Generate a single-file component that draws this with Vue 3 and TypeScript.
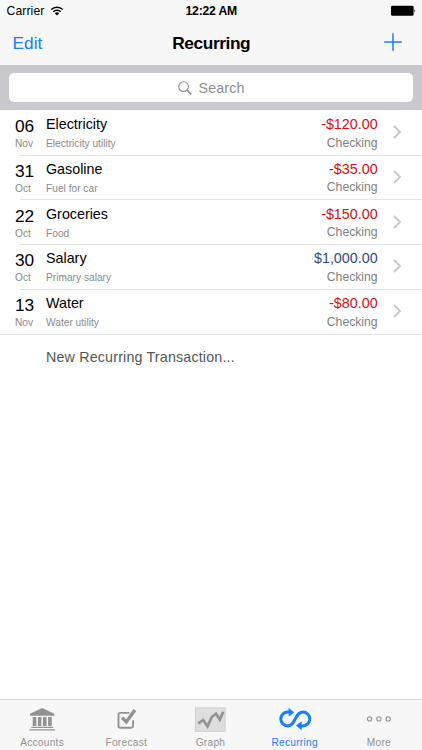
<script setup lang="ts">
interface Entry {
  day: string
  month: string
  name: string
  note: string
  amount: string
  account: string
}

const entries: Entry[] = [
  { day: '06', month: 'Nov', name: 'Electricity', note: 'Electricity utility', amount: '-$120.00', account: 'Checking' },
  { day: '31', month: 'Oct', name: 'Gasoline', note: 'Fuel for car', amount: '-$35.00', account: 'Checking' },
  { day: '22', month: 'Oct', name: 'Groceries', note: 'Food', amount: '-$150.00', account: 'Checking' },
  { day: '30', month: 'Oct', name: 'Salary', note: 'Primary salary', amount: '$1,000.00', account: 'Checking' },
  { day: '13', month: 'Nov', name: 'Water', note: 'Water utility', amount: '-$80.00', account: 'Checking' },
]
const tabs: string[] = ['Accounts', 'Forecast', 'Graph', 'Recurring', 'More']
</script>

<template>
  <div class="screen">
    <header class="top">
      <div class="status">
        <div class="carrier">
          <span>Carrier</span>
          <svg class="wifi" width="14" height="10" viewBox="0 0 14 10">
            <path d="M1.2 3.5a8.4 8.4 0 0 1 11.6 0M3.3 5.8a5.3 5.3 0 0 1 7.4 0" fill="none" stroke="#000" stroke-width="1.5" />
            <path d="M7 9.6 4.8 7.3a3.2 3.2 0 0 1 4.4 0z" />
          </svg>
        </div>
        <span class="clock">12:22 AM</span>
        <svg class="battery" width="26" height="12" viewBox="0 0 26 12">
          <rect x="1" y=".8" width="22.6" height="10" rx="1.4" />
          <path d="M24.4 4.2q1.6 1.6 0 3.2z" />
        </svg>
      </div>
      <nav class="nav">
        <a class="edit">Edit</a>
        <h1>Recurring</h1>
        <svg class="plus" width="18" height="18" viewBox="0 0 18 18">
          <path d="M9 .2v17.6M.2 9h17.6" stroke="#167efb" stroke-width="1.5" />
        </svg>
      </nav>
    </header>
    <div class="search-bar">
      <div class="field">
        <svg width="14" height="14" viewBox="0 0 14 14" fill="none" stroke="#8e8e93">
          <circle cx="5.6" cy="5.6" r="4.8" stroke-width="1.1" />
          <path d="m9.1 9.1 4.3 4.3" stroke-width="1.5" />
        </svg>
        <span>Search</span>
      </div>
    </div>
    <main>
      <div v-for="entry in entries" :key="entry.name" class="row">
        <div class="date">
          <span class="day">{{ entry.day }}</span>
          <span class="small">{{ entry.month }}</span>
        </div>
        <div class="details">
          <span class="name">{{ entry.name }}</span>
          <span class="small">{{ entry.note }}</span>
        </div>
        <div class="money">
          <span class="amount" :class="{ income: !entry.amount.startsWith('-') }">{{ entry.amount }}</span>
          <span class="account">{{ entry.account }}</span>
        </div>
        <svg class="chevron" width="9" height="14" viewBox="0 0 9 14">
          <path d="m1 1 6 6-6 6" fill="none" stroke="#c7c7cc" stroke-width="1.9" />
        </svg>
      </div>
      <div class="new">New Recurring Transaction...</div>
    </main>
    <footer class="tabs">
      <div v-for="tab in tabs" :key="tab" class="tab" :class="{ active: tab === 'Recurring' }">
        <svg v-if="tab === 'Accounts'" width="34" height="26" viewBox="0 0 34 26" fill="#929292">
          <path d="M17.2 1 29.4 6.8v2H5v-2zM7.7 10h3.6v9H7.7zM12.9 10h3.5v9h-3.5zM18 10h3.5v9H18zM23.1 10h3.6v9h-3.6zM6.2 19.8h22V21h-22zM4.5 22.2h25.4v1.2H4.5z" />
        </svg>
        <svg v-else-if="tab === 'Forecast'" width="34" height="26" viewBox="0 0 34 26" fill="none" stroke="#929292">
          <path d="M20.4 5.9H11.3a1.8 1.8 0 0 0-1.8 1.8v11.2a1.8 1.8 0 0 0 1.8 1.8h11a1.8 1.8 0 0 0 1.8-1.8v-5.6" stroke-width="1.9" />
          <path d="m13.1 10.6 4.2 4.3 8.6-11.8" stroke-width="3.4" />
        </svg>
        <svg v-else-if="tab === 'Graph'" width="34" height="26" viewBox="0 0 34 26">
          <rect x="2.3" y=".9" width="29.8" height="23.4" fill="#dedede" stroke="#c8c8c8" stroke-width=".8" />
          <path d="m5.2 16.3 5-3.3 4.3 6.3 4.3-9.3 4.2-3.2 3.8 5.8 3.4-7.9" fill="none" stroke="#929292" stroke-width="2.7" />
        </svg>
        <svg v-else-if="tab === 'Recurring'" width="34" height="26" viewBox="0 0 34 26">
          <path d="M12.6 4.9H9.8a7 7 0 0 0 0 14c4 0 5.6-3.2 7.5-7s3.5-7 7.5-7a7 7 0 0 1 0 14H22" fill="none" stroke="#167efb" stroke-width="3" />
          <path d="m10.6.8 5.7 4.6-5.6 4.2zM23.7 23.2 18 18.5l5.6-4.2z" fill="#167efb" />
        </svg>
        <svg v-else width="34" height="26" viewBox="0 0 34 26" fill="none" stroke="#929292" stroke-width="1.1">
          <circle cx="7.6" cy="11.9" r="2.1" /><circle cx="16.9" cy="11.9" r="2.1" /><circle cx="26.2" cy="11.9" r="2.1" />
        </svg>
        <span>{{ tab }}</span>
      </div>
    </footer>
  </div>
</template>

<style>
body { margin: 0; }
</style>

<style scoped>
.screen {
  width: 422px;
  height: 750px;
  display: flex;
  flex-direction: column;
  background: #fff;
  color: #000;
  font-family: "Liberation Sans", Arial, sans-serif;
  overflow: hidden;
}
.top { height: 65px; flex: none; background: #f7f7f7; }
.status {
  height: 20px;
  padding: 1px 6px 0 6.5px;
  box-sizing: border-box;
  display: grid;
  grid-template-columns: 1fr auto 1fr;
  align-items: center;
  font-size: 12.2px;
  line-height: 20px;
}
.carrier { display: flex; align-items: center; gap: 6px; letter-spacing: 0.1px; }
.clock { font-weight: 700; letter-spacing: -0.2px; }
.battery { justify-self: end; }
.nav {
  height: 45px;
  padding: 0 20px 0 12.5px;
  display: grid;
  grid-template-columns: 1fr auto 1fr;
  align-items: center;
  font-size: 17.3px;
}
.edit { color: #167efb; padding-top: 2px; }
h1 {
  margin: 1px 0 0 8px;
  font-size: 17.3px;
  letter-spacing: -0.4px;
}
.plus { justify-self: end; margin-top: -1px; }
.search-bar { height: 45px; flex: none; box-sizing: border-box; background: #c9c8ce; padding: 8px 9px; }
.field {
  height: 29px;
  border-radius: 5px;
  background: #fff;
  color: #8e8e93;
  display: flex;
  align-items: center;
  justify-content: center;
  gap: 7px;
  font-size: 14.3px;
  letter-spacing: 0.1px;
}
main { flex: 1; padding-top: 0.8px; }
.row {
  height: 44.8px;
  box-sizing: border-box;
  padding: 4.2px 20px 0 15px;
  display: grid;
  grid-template-columns: 31px 1fr auto 9px;
  background: linear-gradient(#e3e3e5, #e3e3e5) 20px 100% / 100% 1px no-repeat;
}
.row:nth-child(5) { background-position: 0 100%; }
.date, .details, .money { display: flex; flex-direction: column; }
.date { padding-top: 1px; }
.day { font-size: 17.3px; line-height: 20px; margin-bottom: 1px; }
.name, .amount { font-size: 14.3px; line-height: 18px; }
.name { margin-bottom: 4px; }
.small { font-size: 10.2px; line-height: 14px; color: #8a8a8a; }
.money { text-align: right; margin-right: 15.4px; }
.amount { color: #e00b0b; margin-bottom: 2.6px; }
.amount.income { color: #2f4a80; }
.account { font-size: 12.2px; line-height: 14px; color: #808080; }
.chevron { margin-top: 10px; }
.new {
  padding: 13.2px 0 0 46px;
  font-size: 14.3px;
  line-height: 18px;
  letter-spacing: 0.16px;
  color: #555;
}
.tabs {
  height: 51px;
  flex: none;
  box-sizing: border-box;
  border-top: 1px solid #d9d9d9;
  background: #f7f7f7;
  display: grid;
  grid-template-columns: repeat(5, 84.2px);
}
.tab {
  padding-top: 7px;
  display: flex;
  flex-direction: column;
  align-items: center;
  color: #929292;
  font-size: 10.2px;
  line-height: 14px;
  letter-spacing: 0.25px;
}
.tab span { margin-top: 3px; }
.tab.active { color: #167efb; }
</style>
